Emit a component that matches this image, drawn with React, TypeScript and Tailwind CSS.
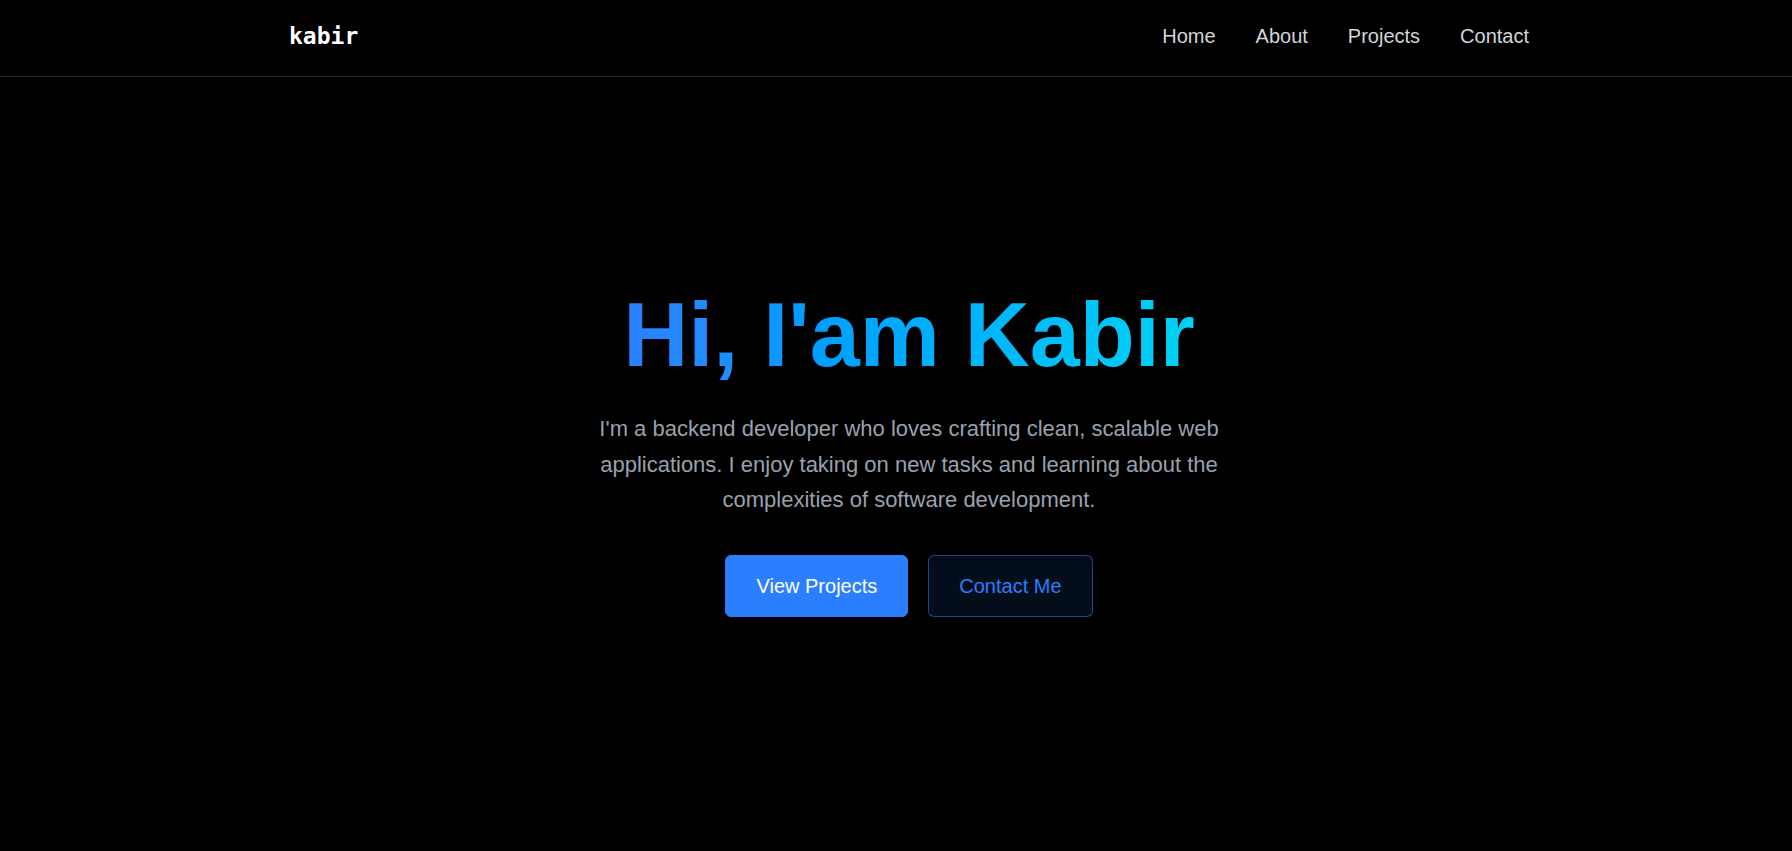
import React from 'react';

const navLinks = ['Home', 'About', 'Projects', 'Contact'];

const Navbar: React.FC = () => {
  return (
    <nav className="border-b border-neutral-800 bg-black">
      <div className="pl-[26px]">
        <div className="max-w-7xl mx-auto px-5 pt-5 pb-6 flex justify-between items-center">
          <a href="#" className="text-[23px] leading-8 font-bold text-white font-['DejaVu_Sans_Mono',monospace]">
            kabir
          </a>
          <ul className="flex items-center gap-10">
            {navLinks.map((link) => (
              <li key={link}>
                <a href="#" className="text-xl text-gray-300 hover:text-white">
                  {link}
                </a>
              </li>
            ))}
          </ul>
        </div>
      </div>
    </nav>
  );
};

const Hero: React.FC = () => {
  return (
    <section className="pl-[26px]">
      <div className="max-w-7xl mx-auto px-5 pt-[213px] flex flex-col items-center text-center">
        <h1 className="text-[90px] leading-none font-bold bg-linear-to-r from-blue-500 to-cyan-400 bg-clip-text text-transparent">
          Hi, I'am Kabir
        </h1>
        <p className="mt-[31px] max-w-2xl text-[22px] leading-[35.5px] text-gray-400">
          I'm a backend developer who loves crafting clean, scalable web applications. I enjoy
          taking on new tasks and learning about the complexities of software development.
        </p>
        <div className="mt-[37px] flex items-center gap-5">
          <a
            href="#projects"
            className="px-[30px] py-4 text-xl border border-blue-500 bg-blue-500 text-white rounded-md hover:bg-blue-600"
          >
            View Projects
          </a>
          <a
            href="#contact"
            className="px-[30px] py-4 text-xl border border-blue-500/50 bg-blue-500/10 text-blue-500 rounded-md hover:bg-blue-500/20"
          >
            Contact Me
          </a>
        </div>
      </div>
    </section>
  );
};

export default function App() {
  return (
    <div className="min-h-screen bg-black font-['Liberation_Sans',Arial,sans-serif]">
      <Navbar />
      <Hero />
    </div>
  );
}
